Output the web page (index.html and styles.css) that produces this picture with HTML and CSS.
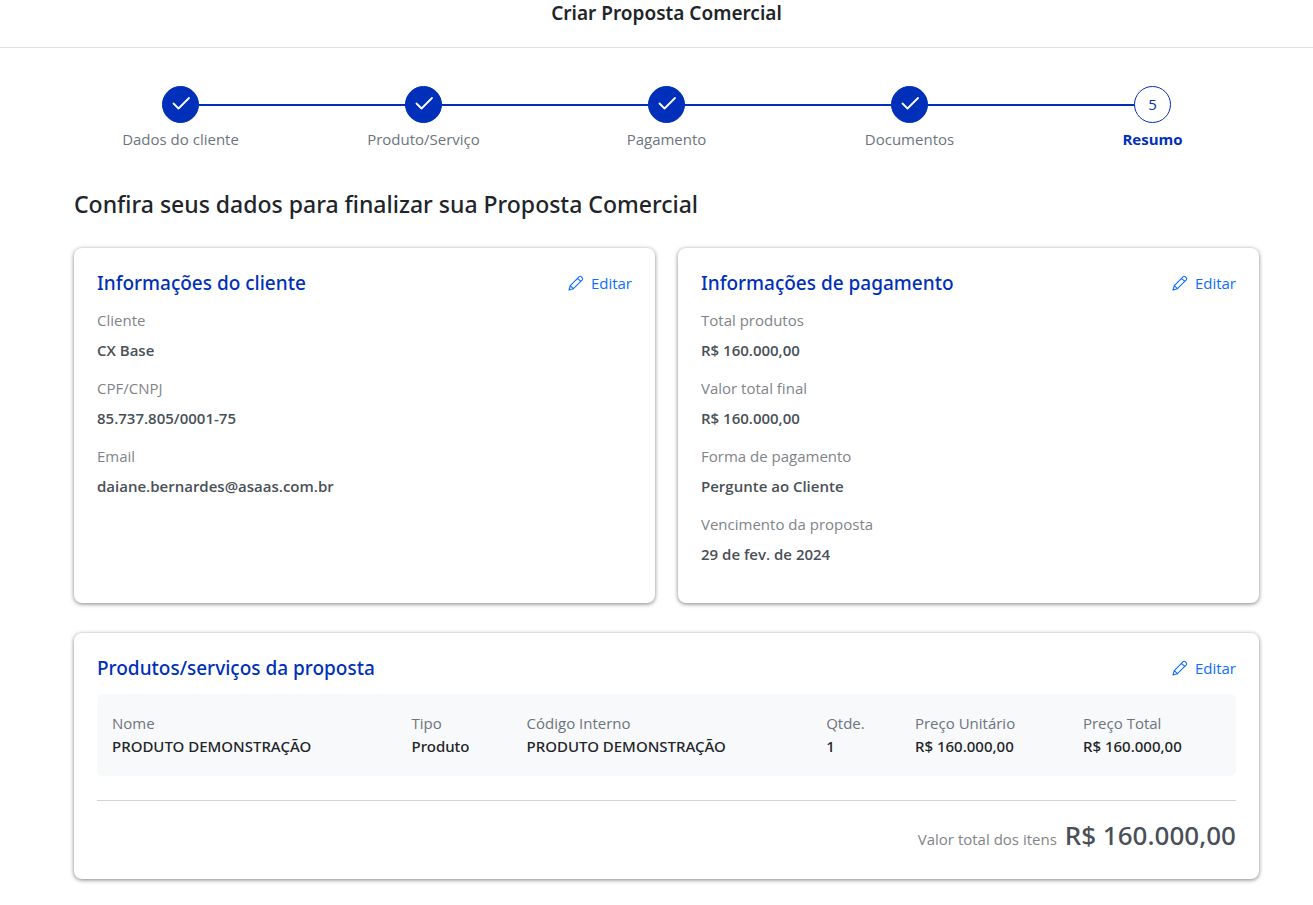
FILE: index.html
```html
<!DOCTYPE html>
<html lang="pt-BR">
<head>
    <meta charset="UTF-8">
    <meta name="viewport" content="width=device-width, initial-scale=1.0">
    <title>Criar Proposta Comercial</title>
    <link rel="stylesheet" href="styles.css">
</head>
<body>

    <svg class="sprite" aria-hidden="true">
        <symbol id="icon-check" viewBox="0 0 20 20">
            <path d="M2.5 9.5 L7.5 14.5 L18 4" fill="none" stroke="currentColor" stroke-width="1.8" stroke-linecap="round" stroke-linejoin="round"/>
        </symbol>
        <symbol id="icon-pencil" viewBox="0 0 16 16">
            <path d="M1 15 L2.3 10.6 L11.2 1.7 Q12.2 0.8 13.2 1.7 L14.3 2.8 Q15.2 3.8 14.3 4.8 L5.4 13.7 Z M2.3 10.6 L5.4 13.7 M9.6 3.3 L12.7 6.4" fill="none" stroke="currentColor" stroke-width="1.1" stroke-linejoin="round"/>
        </symbol>
    </svg>

    <header class="page-header">
        <h1>Criar Proposta Comercial</h1>
    </header>

    <main class="content">
        <ol class="stepper">
            <li class="step done">
                <span class="step-circle"><svg class="check"><use href="#icon-check"/></svg></span>
                <span class="step-label">Dados do cliente</span>
            </li>
            <li class="step done">
                <span class="step-circle"><svg class="check"><use href="#icon-check"/></svg></span>
                <span class="step-label">Produto/Serviço</span>
            </li>
            <li class="step done">
                <span class="step-circle"><svg class="check"><use href="#icon-check"/></svg></span>
                <span class="step-label">Pagamento</span>
            </li>
            <li class="step done">
                <span class="step-circle"><svg class="check"><use href="#icon-check"/></svg></span>
                <span class="step-label">Documentos</span>
            </li>
            <li class="step current" aria-current="step">
                <span class="step-circle">5</span>
                <span class="step-label">Resumo</span>
            </li>
        </ol>

        <h2 class="page-title">Confira seus dados para finalizar sua Proposta Comercial</h2>

        <div class="cards">
            <section class="card">
                <div class="card-header">
                    <h3>Informações do cliente</h3>
                    <a href="#cliente" class="edit-link"><svg class="pencil"><use href="#icon-pencil"/></svg>Editar</a>
                </div>
                <dl class="info-list">
                    <dt>Cliente</dt>
                    <dd>CX Base</dd>
                    <dt>CPF/CNPJ</dt>
                    <dd>85.737.805/0001-75</dd>
                    <dt>Email</dt>
                    <dd>daiane.bernardes@asaas.com.br</dd>
                </dl>
            </section>

            <section class="card">
                <div class="card-header">
                    <h3>Informações de pagamento</h3>
                    <a href="#pagamento" class="edit-link"><svg class="pencil"><use href="#icon-pencil"/></svg>Editar</a>
                </div>
                <dl class="info-list">
                    <dt>Total produtos</dt>
                    <dd>R$ 160.000,00</dd>
                    <dt>Valor total final</dt>
                    <dd>R$ 160.000,00</dd>
                    <dt>Forma de pagamento</dt>
                    <dd>Pergunte ao Cliente</dd>
                    <dt>Vencimento da proposta</dt>
                    <dd>29 de fev. de 2024</dd>
                </dl>
            </section>

            <section class="card card-wide">
                <div class="card-header">
                    <h3>Produtos/serviços da proposta</h3>
                    <a href="#produtos" class="edit-link"><svg class="pencil"><use href="#icon-pencil"/></svg>Editar</a>
                </div>
                <div class="table-box">
                    <table class="products">
                        <thead>
                            <tr>
                                <th class="col-name">Nome</th>
                                <th class="col-type">Tipo</th>
                                <th class="col-name">Código Interno</th>
                                <th class="col-qty">Qtde.</th>
                                <th>Preço Unitário</th>
                                <th>Preço Total</th>
                            </tr>
                        </thead>
                        <tbody>
                            <tr>
                                <td>PRODUTO DEMONSTRAÇÃO</td>
                                <td>Produto</td>
                                <td>PRODUTO DEMONSTRAÇÃO</td>
                                <td>1</td>
                                <td>R$ 160.000,00</td>
                                <td>R$ 160.000,00</td>
                            </tr>
                        </tbody>
                    </table>
                </div>
                <div class="total">
                    <span class="total-label">Valor total dos itens</span>
                    <strong class="total-value">R$ 160.000,00</strong>
                </div>
            </section>
        </div>
    </main>

</body>
</html>
```
FILE: styles.css
```css
* {
    box-sizing: border-box;
}

body {
    margin: 0;
    background-color: #fff;
    color: #212529;
    font-family: 'Open Sans', 'Noto Sans', sans-serif;
    font-size: 15px;
    line-height: 22px;
}

h1, h2, h3, dl, dd, ol {
    margin: 0;
    padding: 0;
}

.sprite {
    display: none;
}

.page-header {
    padding: 0 0 21px 20px;
    border-bottom: 1px solid #dee2e6;
    text-align: center;
}

.page-header h1 {
    font-family: 'Noto Sans', 'Open Sans', sans-serif;
    font-size: 19px;
    line-height: 26px;
    font-weight: 600;
}

.content {
    padding: 38px 54px 25px 74px;
}

/* Stepper */
.stepper {
    display: flex;
    list-style: none;
    margin: 0 -15px 38px;
}

.step {
    flex: 1;
    position: relative;
    display: flex;
    flex-direction: column;
    align-items: center;
    gap: 5px;
    color: #6c757d;
}

.step.done::after {
    content: "";
    position: absolute;
    top: 18px;
    left: 50%;
    width: 100%;
    height: 2px;
    background-color: #0030b9;
}

.step-circle {
    position: relative;
    z-index: 1;
    display: flex;
    align-items: center;
    justify-content: center;
    width: 37px;
    height: 37px;
    padding-bottom: 2px;
    border: 1px solid #0030b9;
    border-radius: 50%;
    background-color: #fff;
    color: #0030b9;
}

.done .step-circle {
    background-color: #0030b9;
    color: #fff;
}

.check {
    width: 20px;
    height: 20px;
}

.current .step-label {
    color: #0030b9;
    font-weight: 700;
}

.page-title {
    font-family: 'Noto Sans', 'Open Sans', sans-serif;
    font-size: 23px;
    line-height: 32px;
    font-weight: 500;
    margin-bottom: 28px;
}

/* Cards */
.cards {
    display: grid;
    grid-template-columns: 1fr 1fr;
    gap: 30px 23px;
}

.card {
    padding: 24px 23px;
    background-color: #fff;
    border-radius: 8px;
    box-shadow: 0 1px 4px rgba(0, 0, 0, 0.5);
}

.card-wide {
    grid-column: 1 / -1;
}

.card-header {
    display: flex;
    justify-content: space-between;
    align-items: center;
    margin-bottom: 15px;
}

.card-header h3 {
    font-family: 'Noto Sans', 'Open Sans', sans-serif;
    font-size: 19px;
    line-height: 22px;
    font-weight: 500;
    color: #0030b9;
}

.edit-link {
    display: flex;
    align-items: center;
    gap: 7px;
    color: #0d6efd;
    text-decoration: none;
}

.pencil {
    width: 16px;
    height: 16px;
}

.info-list dt {
    color: #808488;
    margin-bottom: 8px;
}

.info-list dd {
    color: #495057;
    font-weight: 600;
    margin-bottom: 16px;
}

.info-list dd:last-child {
    margin-bottom: 14px;
}

/* Products table */
.table-box {
    padding: 18px 0;
    background-color: #f8f9fa;
    border-radius: 6px;
}

.products {
    width: 100%;
    table-layout: fixed;
    border-collapse: collapse;
    line-height: 23px;
    text-align: left;
}

.products th,
.products td {
    padding: 0 0 0 15px;
}

.products th {
    color: #6c757d;
    font-weight: 400;
}

.products td {
    font-family: 'Noto Sans', 'Open Sans', sans-serif;
    font-weight: 500;
    white-space: nowrap;
}

.products .col-name {
    width: 26.3%;
}

.products .col-type {
    width: 10.1%;
}

.products .col-qty {
    width: 7.8%;
}

.total {
    display: flex;
    justify-content: flex-end;
    align-items: baseline;
    gap: 8px;
    margin-top: 24px;
    padding: 16px 0 2px;
    border-top: 1px solid #d0d2d4;
}

.total-label {
    color: #808488;
}

.total-value {
    font-family: 'Noto Sans', 'Open Sans', sans-serif;
    font-size: 26px;
    line-height: 36px;
    font-weight: 500;
    color: #495057;
}
```
